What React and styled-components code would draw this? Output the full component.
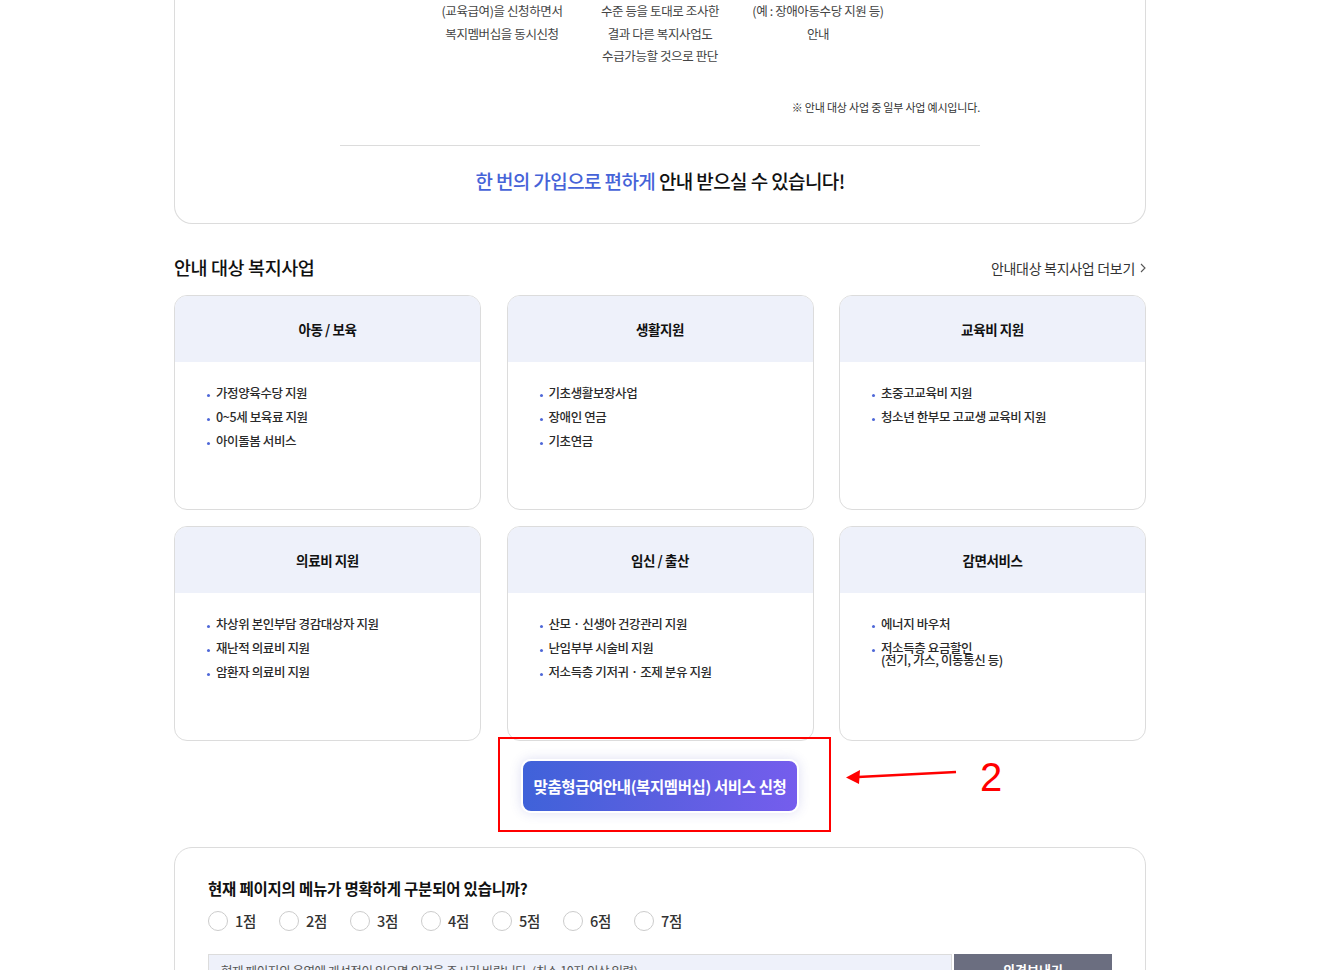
import styled, { createGlobalStyle } from 'styled-components';

const GlobalStyle = createGlobalStyle`
  body {
    margin: 0;
    background: #fff;
    font-family: "Noto Sans CJK KR", "Noto Sans", sans-serif;
    color: #222;
    letter-spacing: -0.4px;
  }
  ul { margin: 0; padding: 0; list-style: none; }
`;

const Page = styled.div`
  width: 1320px;
  height: 970px;
  overflow: hidden;
`;

const Inner = styled.div`
  width: 972px;
  margin: 0 auto;
`;

const IntroBox = styled.div`
  border: 1px solid #dcdcdc;
  border-top: none;
  border-radius: 0 0 18px 18px;
  padding: 0 0 28px;
  display: flex;
  flex-direction: column;
  align-items: center;
`;

const Steps = styled.div`
  display: grid;
  grid-template-columns: repeat(3, 158px);
  justify-content: center;
`;

const Step = styled.p`
  margin: 0;
  font-size: 12.5px;
  line-height: 22.5px;
  color: #444;
  text-align: center;
  white-space: nowrap;
`;

const Narrow = styled.div`
  width: 640px;
  display: flex;
  flex-direction: column;
`;

const Note = styled.p`
  margin: 31px 0 0;
  font-size: 11px;
  line-height: 16px;
  color: #333;
  text-align: right;
  letter-spacing: -0.2px;
`;

const Divider = styled.hr`
  margin: 30px 0 0;
  border: none;
  border-top: 1px solid #dcdcdc;
  width: 100%;
`;

const Headline = styled.p`
  margin: 21px 0 0;
  font-size: 19px;
  line-height: 28px;
  font-weight: 500;
  color: #111;
  text-align: center;
  letter-spacing: -0.6px;
`;

const Blue = styled.span`
  color: #4663d8;
`;

const SectionHead = styled.div`
  display: flex;
  justify-content: space-between;
  align-items: center;
  margin-top: 30px;
  height: 26px;
`;

const SectionTitle = styled.h2`
  margin: 0;
  font-size: 18.5px;
  font-weight: 500;
  color: #111;
`;

const MoreLink = styled.a`
  font-size: 14px;
  color: #333;
  display: flex;
  align-items: center;
  gap: 5px;
  margin-top: 3px;
  letter-spacing: -0.3px;
`;

const CardGrid = styled.div`
  display: grid;
  grid-template-columns: repeat(3, 307px);
  justify-content: space-between;
  row-gap: 16px;
  margin-top: 15px;
`;

const Card = styled.div`
  height: 215px;
  box-sizing: border-box;
  border: 1px solid #dcdcdc;
  border-radius: 13px;
  overflow: hidden;
`;

const CardHead = styled.div`
  height: 66px;
  background: #eef1fa;
  display: flex;
  align-items: center;
  justify-content: center;
  font-size: 13.5px;
  font-weight: 700;
  color: #111;
`;

const CardList = styled.ul`
  padding: 25px 0 0 32px !important;
`;

const CardItem = styled.li`
  position: relative;
  padding-left: 9px;
  font-size: 12.5px;
  font-weight: 500;
  line-height: 12px;
  color: #2a2a2a;
  margin-bottom: 12px;
  &::before {
    content: '';
    position: absolute;
    left: 0;
    top: 7px;
    width: 3px;
    height: 3px;
    border-radius: 50%;
    background: #4f68d8;
  }
`;

const ButtonRow = styled.div`
  display: flex;
  justify-content: center;
  margin-top: 18px;
  position: relative;
`;

const ApplyButton = styled.button`
  width: 278px;
  height: 54px;
  border: 2px solid #fff;
  border-radius: 10px;
  background: linear-gradient(90deg, #3f62d9 0%, #5b5fe0 50%, #755ded 100%);
  box-shadow: 0 0 12px rgba(70, 80, 190, 0.18);
  color: #fff;
  font-family: inherit;
  font-size: 15.5px;
  font-weight: 700;
  letter-spacing: -0.4px;
  cursor: pointer;
`;

const Highlight = styled.div`
  position: absolute;
  left: 324px;
  top: -22px;
  width: 329px;
  height: 91px;
  border: 2px solid #f00;
  pointer-events: none;
`;

const Marker = styled.div`
  position: absolute;
  left: 672px;
  top: -2px;
  display: flex;
  align-items: center;
  gap: 22px;
`;

const MarkerNum = styled.span`
  font-family: "Liberation Sans", Arial, sans-serif;
  font-size: 40px;
  line-height: 40px;
  color: #f00;
`;

const Survey = styled.div`
  margin-top: 34px;
  border: 1px solid #dcdcdc;
  border-radius: 18px;
  padding: 29px 33px 0;
  height: 200px;
`;

const Question = styled.h3`
  margin: 0;
  font-size: 15.5px;
  line-height: 22px;
  font-weight: 700;
  color: #111;
  letter-spacing: -0.2px;
`;

const Radios = styled.div`
  display: flex;
  margin-top: 12px;
`;

const RadioLabel = styled.label`
  width: 71px;
  display: flex;
  align-items: center;
  gap: 7px;
  font-size: 14.5px;
  color: #333;
  font-weight: 500;
  height: 20px;
`;

const Circle = styled.span`
  width: 18px;
  height: 18px;
  border: 1px solid #ccc;
  border-radius: 50%;
  background: #fff;
  display: inline-block;
`;

const OpinionRow = styled.div`
  display: flex;
  margin-top: 23px;
  height: 60px;
`;

const Opinion = styled.div`
  flex: 0 0 744px;
  box-sizing: border-box;
  background: #eef1fa;
  border: 1px solid #dcdcdc;
  padding: 6px 12px;
  font-size: 12.5px;
  color: #555;
`;

const SendButton = styled.button`
  margin-left: 2px;
  width: 158px;
  border: none;
  background: #6b6e80;
  color: #fff;
  font-family: inherit;
  font-size: 13px;
  font-weight: 700;
  padding: 6px 0 0;
  align-self: stretch;
  display: flex;
  justify-content: center;
`;

const cards = [
  { title: '아동 / 보육', items: ['가정양육수당 지원', '0~5세 보육료 지원', '아이돌봄 서비스'] },
  { title: '생활지원', items: ['기초생활보장사업', '장애인 연금', '기초연금'] },
  { title: '교육비 지원', items: ['초중고교육비 지원', '청소년 한부모 고교생 교육비 지원'] },
  { title: '의료비 지원', items: ['차상위 본인부담 경감대상자 지원', '재난적 의료비 지원', '암환자 의료비 지원'] },
  { title: '임신 / 출산', items: ['산모 · 신생아 건강관리 지원', '난임부부 시술비 지원', '저소득층 기저귀 · 조제 분유 지원'] },
  { title: '감면서비스', items: ['에너지 바우처', ['저소득층 요금할인', '(전기, 가스, 이동통신 등)']] },
];

const steps = [
  ['(교육급여)을 신청하면서', '복지멤버십을 동시신청'],
  ['수준 등을 토대로 조사한', '결과 다른 복지사업도', '수급가능할 것으로 판단'],
  ['(예 : 장애아동수당 지원 등)', '안내'],
];

function App() {
  return (
    <Page>
      <GlobalStyle />
      <Inner>
        <IntroBox>
          <Steps>
            {steps.map((lines, i) => (
              <div key={i}>
                {lines.map((l) => <Step key={l}>{l}</Step>)}
              </div>
            ))}
          </Steps>
          <Narrow>
            <Note>※ 안내 대상 사업 중 일부 사업 예시입니다.</Note>
            <Divider />
            <Headline>
              <Blue>한 번의 가입으로 편하게</Blue> 안내 받으실 수 있습니다!
            </Headline>
          </Narrow>
        </IntroBox>

        <SectionHead>
          <SectionTitle>안내 대상 복지사업</SectionTitle>
          <MoreLink>
            안내대상 복지사업 더보기
            <svg width="6" height="10" viewBox="0 0 6 10">
              <path d="M1 1l4 4-4 4" fill="none" stroke="#555" strokeWidth="1.1" />
            </svg>
          </MoreLink>
        </SectionHead>

        <CardGrid>
          {cards.map((c) => (
            <Card key={c.title}>
              <CardHead>{c.title}</CardHead>
              <CardList>
                {c.items.map((it, i) => (
                  <CardItem key={i}>
                    {Array.isArray(it) ? (<>{it[0]}<br />{it[1]}</>) : it}
                  </CardItem>
                ))}
              </CardList>
            </Card>
          ))}
        </CardGrid>

        <ButtonRow>
          <ApplyButton>맞춤형급여안내(복지멤버십) 서비스 신청</ApplyButton>
          <Highlight />
          <Marker>
            <svg width="112" height="20" viewBox="0 0 112 20">
              <path d="M110 5 L12 10" stroke="#f00" strokeWidth="2.5" fill="none" />
              <path d="M0 10.5 L14 3 L13 17 Z" fill="#f00" />
            </svg>
            <MarkerNum>2</MarkerNum>
          </Marker>
        </ButtonRow>

        <Survey>
          <Question>현재 페이지의 메뉴가 명확하게 구분되어 있습니까?</Question>
          <Radios>
            {[1, 2, 3, 4, 5, 6, 7].map((n) => (
              <RadioLabel key={n}>
                <Circle />
                {n}점
              </RadioLabel>
            ))}
          </Radios>
          <OpinionRow>
            <Opinion>현재 페이지의 운영에 개선점이 있으면 의견을 주시기 바랍니다. (최소 10자 이상 입력)</Opinion>
            <SendButton>의견보내기</SendButton>
          </OpinionRow>
        </Survey>
      </Inner>
    </Page>
  );
}

export default App;
